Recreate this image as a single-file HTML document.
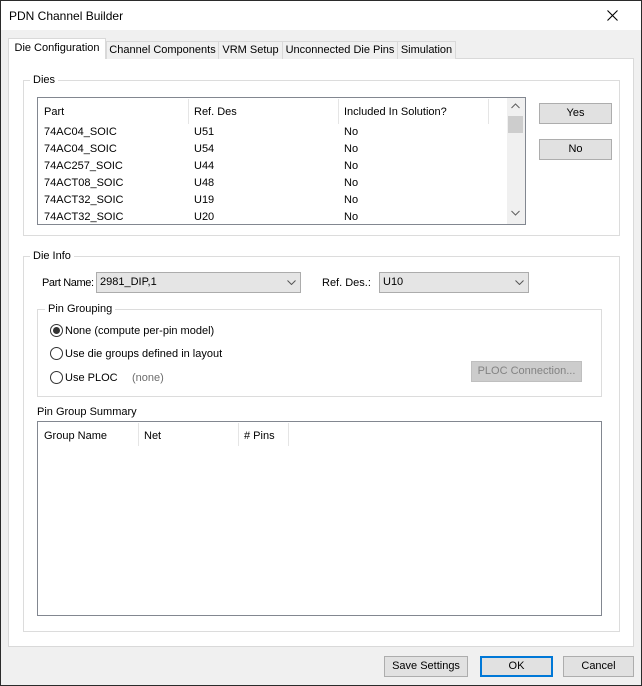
<!DOCTYPE html>
<html><head><style>
*{box-sizing:border-box;margin:0;padding:0}
body{width:642px;height:686px;background:#f0f0f0;font-family:"Liberation Sans",sans-serif;font-size:11px;color:#000;position:relative;overflow:hidden}
.a{position:absolute}
.t{position:absolute;white-space:nowrap;line-height:14px}
.grp{position:absolute;border:1px solid #dcdcdc}
.lbl{position:absolute;background:#fff;padding:0 3px;line-height:14px;white-space:nowrap}
.btn{position:absolute;background:#e1e1e1;border:1px solid #adadad;text-align:center;line-height:19px;white-space:nowrap}
.cb{position:absolute;background:#e5e5e5;border:1px solid #acacac;line-height:18px;padding-left:3px}
.tab{position:absolute;top:41px;height:18px;border:1px solid #d9d9d9;border-bottom:none;background:#f0f0f0;text-align:center;line-height:16px;white-space:nowrap;overflow:hidden;font-size:11px}
.rad{position:absolute;width:13px;height:13px;border:1px solid #333;border-radius:50%;background:#fff}
</style></head><body>
<div class="a" style="left:0;top:0;width:642px;height:686px;border:1px solid #2b2b2b"></div>
<div class="a" style="left:1px;top:1px;width:640px;height:29px;background:#fff"></div>
<div class="t" style="left:9px;top:9px;font-size:12px">PDN Channel Builder</div>
<svg class="a" style="left:607px;top:10px" width="11" height="11"><path d="M0.5 0.5L10.5 10.5M10.5 0.5L0.5 10.5" stroke="#000" stroke-width="1.1"/></svg>

<div class="a" style="left:8px;top:58px;width:626px;height:589px;background:#fff;border:1px solid #d9d9d9"></div>
<div class="tab" style="left:106px;width:113px">Channel Components</div>
<div class="tab" style="left:218px;width:65px">VRM Setup</div>
<div class="tab" style="left:282px;width:116px">Unconnected Die Pins</div>
<div class="tab" style="left:397px;width:59px">Simulation</div>
<div class="tab" style="left:8px;top:38px;height:21px;width:98px;background:#fff;line-height:19px">Die Configuration</div>

<div class="grp" style="left:23px;top:80px;width:597px;height:156px"></div>
<div class="lbl" style="left:30px;top:73px">Dies</div>
<div class="a" style="left:37px;top:97px;width:489px;height:128px;border:1px solid #828790;background:#fff"></div>
<div class="a" style="left:188px;top:99px;width:1px;height:25px;background:#e5e5e5"></div>
<div class="a" style="left:338px;top:99px;width:1px;height:25px;background:#e5e5e5"></div>
<div class="a" style="left:488px;top:99px;width:1px;height:25px;background:#e5e5e5"></div>
<div class="t" style="left:44px;top:105px">Part</div>
<div class="t" style="left:194px;top:105px">Ref. Des</div>
<div class="t" style="left:344px;top:105px">Included In Solution?</div>
<div class="a" style="left:507px;top:98px;width:18px;height:126px;background:#f0f0f0"></div>
<div class="a" style="left:508px;top:116px;width:15px;height:17px;background:#cdcdcd"></div>
<svg class="a" style="left:511px;top:103px" width="9" height="6"><path d="M0.5 5L4.5 1L8.5 5" stroke="#606060" fill="none"/></svg>
<svg class="a" style="left:511px;top:210px" width="9" height="6"><path d="M0.5 1L4.5 5L8.5 1" stroke="#606060" fill="none"/></svg>
<div class="t" style="left:44px;top:125px">74AC04_SOIC</div><div class="t" style="left:194px;top:125px">U51</div><div class="t" style="left:344px;top:125px">No</div>
<div class="t" style="left:44px;top:142px">74AC04_SOIC</div><div class="t" style="left:194px;top:142px">U54</div><div class="t" style="left:344px;top:142px">No</div>
<div class="t" style="left:44px;top:159px">74AC257_SOIC</div><div class="t" style="left:194px;top:159px">U44</div><div class="t" style="left:344px;top:159px">No</div>
<div class="t" style="left:44px;top:176px">74ACT08_SOIC</div><div class="t" style="left:194px;top:176px">U48</div><div class="t" style="left:344px;top:176px">No</div>
<div class="t" style="left:44px;top:193px">74ACT32_SOIC</div><div class="t" style="left:194px;top:193px">U19</div><div class="t" style="left:344px;top:193px">No</div>
<div class="t" style="left:44px;top:210px;height:13px;overflow:hidden">74ACT32_SOIC</div><div class="t" style="left:194px;top:210px;height:13px;overflow:hidden">U20</div><div class="t" style="left:344px;top:210px;height:13px;overflow:hidden">No</div>
<div class="btn" style="left:539px;top:103px;width:73px;height:21px">Yes</div>
<div class="btn" style="left:539px;top:139px;width:73px;height:21px">No</div>

<div class="grp" style="left:23px;top:256px;width:597px;height:376px"></div>
<div class="lbl" style="left:30px;top:249px">Die Info</div>
<div class="t" style="left:42px;top:276px;letter-spacing:-0.4px">Part Name:</div>
<div class="cb" style="left:96px;top:272px;width:205px;height:21px">2981_DIP,1</div>
<svg class="a" style="left:287px;top:280px" width="9" height="5"><path d="M0.5 0.5L4.5 4.5L8.5 0.5" stroke="#555" fill="none"/></svg>
<div class="t" style="left:322px;top:276px">Ref. Des.:</div>
<div class="cb" style="left:379px;top:272px;width:150px;height:21px">U10</div>
<svg class="a" style="left:515px;top:280px" width="9" height="5"><path d="M0.5 0.5L4.5 4.5L8.5 0.5" stroke="#555" fill="none"/></svg>

<div class="grp" style="left:37px;top:309px;width:565px;height:88px"></div>
<div class="lbl" style="left:45px;top:302px">Pin Grouping</div>
<div class="rad" style="left:50px;top:324px"></div><div class="a" style="left:53px;top:327px;width:7px;height:7px;border-radius:50%;background:#333"></div>
<div class="t" style="left:65px;top:324px">None (compute per-pin model)</div>
<div class="rad" style="left:50px;top:347px"></div>
<div class="t" style="left:65px;top:347px">Use die groups defined in layout</div>
<div class="rad" style="left:50px;top:371px"></div>
<div class="t" style="left:65px;top:371px">Use PLOC</div>
<div class="t" style="left:132px;top:371px;color:#6d6d6d">(none)</div>
<div class="btn" style="left:471px;top:361px;width:111px;height:21px;background:#ccc;border-color:#bfbfbf;color:#838383">PLOC Connection...</div>

<div class="t" style="left:37px;top:405px">Pin Group Summary</div>
<div class="a" style="left:37px;top:421px;width:565px;height:195px;border:1px solid #828790;background:#fff"></div>
<div class="a" style="left:138px;top:423px;width:1px;height:23px;background:#e5e5e5"></div>
<div class="a" style="left:238px;top:423px;width:1px;height:23px;background:#e5e5e5"></div>
<div class="a" style="left:288px;top:423px;width:1px;height:23px;background:#e5e5e5"></div>
<div class="t" style="left:44px;top:429px">Group Name</div>
<div class="t" style="left:144px;top:429px">Net</div>
<div class="t" style="left:244px;top:429px"># Pins</div>

<div class="btn" style="left:384px;top:656px;width:84px;height:21px">Save Settings</div>
<div class="btn" style="left:480px;top:656px;width:73px;height:21px;border:2px solid #0078d7;line-height:17px">OK</div>
<div class="btn" style="left:563px;top:656px;width:71px;height:21px">Cancel</div>
</body></html>
